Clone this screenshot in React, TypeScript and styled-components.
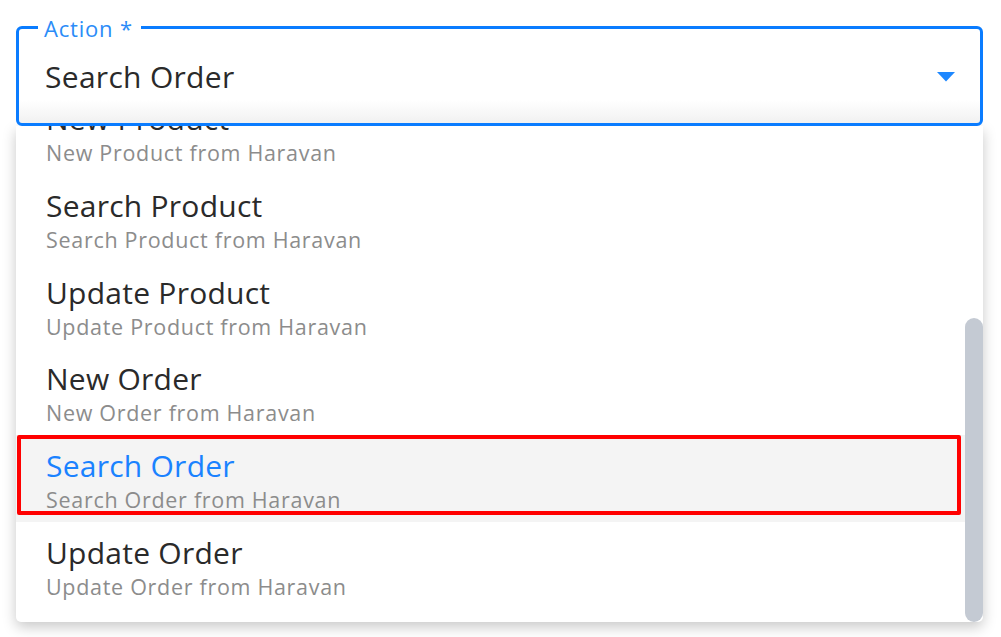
import React from "react";
import styled, { createGlobalStyle } from "styled-components";

const Global = createGlobalStyle`
  html, body { margin: 0; padding: 0; background: #ffffff; }
  body { font-family: "Open Sans", "Noto Sans", sans-serif; }
  * { box-sizing: border-box; }
`;

const Page = styled.div`
  padding: 26px 18px 0 16px;
  width: 1001px;
  height: 637px;
`;

const Field = styled.div`
  position: relative;
`;

const SelectBox = styled.div`
  position: relative;
  z-index: 2;
  height: 100px;
  border: 3px solid #0a7cff;
  border-radius: 6px;
  background: linear-gradient(to bottom, #ffffff 0%, #ffffff 76%, #f1f1f1 100%);
  display: flex;
  align-items: center;
  justify-content: space-between;
  padding: 2px 25px 0 26px;
`;

const Label = styled.span`
  position: absolute;
  top: -14px;
  left: 19px;
  padding: 0 8px 0 6px;
  background: #ffffff;
  color: #2b8cf8;
  font-size: 22px;
  line-height: 26px;
  letter-spacing: 0.8px;
`;

const Value = styled.span`
  font-size: 30px;
  color: #2a2a2a;
  letter-spacing: 0.3px;
  line-height: 38px;
`;

const Arrow = styled.svg`
  width: 18px;
  height: 10px;
  display: block;
`;

const Menu = styled.div`
  position: absolute;
  z-index: 1;
  top: 100px;
  left: 0;
  right: 0;
  height: 496px;
  display: flex;
  background: #ffffff;
  border-radius: 0 0 5px 5px;
  box-shadow: 0 5px 14px rgba(0, 0, 0, 0.22);
  overflow: hidden;
`;

const List = styled.div`
  flex: 1;
  display: flex;
  flex-direction: column;
  justify-content: flex-end;
  overflow: hidden;
  padding-bottom: 13.6px;
`;

const ScrollTrack = styled.div`
  width: 18px;
  flex-shrink: 0;
  display: flex;
  flex-direction: column;
  justify-content: flex-end;
`;

const Thumb = styled.div`
  height: 304px;
  border-radius: 9px;
  background: #c4cad3;
`;

const Item = styled.div<{ $active?: boolean }>`
  position: relative;
  flex-shrink: 0;
  height: 86.67px;
  padding: 12px 20px 0 30px;
  background: ${(p) => (p.$active ? "#f4f4f4" : "#ffffff")};
`;

const Title = styled.div<{ $active?: boolean }>`
  font-size: 30px;
  line-height: 38px;
  letter-spacing: 0.25px;
  color: ${(p) => (p.$active ? "#1a82ff" : "#2a2a2a")};
`;

const Subtitle = styled.div`
  margin-top: 1px;
  font-size: 21.5px;
  line-height: 28px;
  letter-spacing: 0.7px;
  color: #8c8c8c;
`;

const Highlight = styled.div`
  position: absolute;
  left: 1px;
  top: 0;
  width: 944px;
  height: 80px;
  border: 4.5px solid #ff0000;
  border-radius: 2px;
  pointer-events: none;
`;

const items = [
  "New Customer",
  "Search Customer",
  "Update Customer",
  "New Product",
  "Search Product",
  "Update Product",
  "New Order",
  "Search Order",
  "Update Order",
];

export default function App() {
  return (
    <>
      <Global />
      <Page>
        <Field>
          <SelectBox>
            <Label>Action *</Label>
            <Value>Search Order</Value>
            <Arrow viewBox="0 0 18 10">
              <path d="M0 0 L18 0 L9 9.5 Z" fill="#1e88ff" />
            </Arrow>
          </SelectBox>
          <Menu>
            <List>
              {items.map((name) => {
                const active = name === "Search Order";
                return (
                  <Item key={name} $active={active}>
                    <Title $active={active}>{name}</Title>
                    <Subtitle>{name} from Haravan</Subtitle>
                    {active && <Highlight />}
                  </Item>
                );
              })}
            </List>
            <ScrollTrack>
              <Thumb />
            </ScrollTrack>
          </Menu>
        </Field>
      </Page>
    </>
  );
}
